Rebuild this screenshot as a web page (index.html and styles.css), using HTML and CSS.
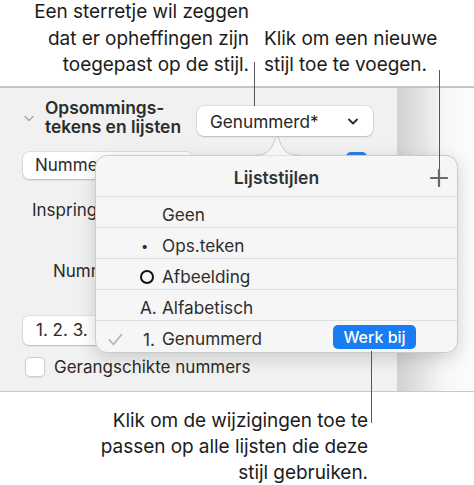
FILE: index.html
```html
<!DOCTYPE html>
<html lang="nl">
<head>
<meta charset="utf-8">
<link rel="stylesheet" href="styles.css">
</head>
<body>
<div class="page">
  <div class="top-notes">
    <p class="note note-left">Een sterretje wil zeggen<br>dat er opheffingen zijn<br>toegepast op de stijl.</p>
    <p class="note note-right">Klik om een nieuwe<br>stijl toe te voegen.</p>
  </div>

  <div class="window">
    <div class="sidebar">
      <div class="section-head">
        <svg class="disclosure" width="10" height="7" viewBox="0 0 10 7"><path d="M1 1.5 L5 5.5 L9 1.5" fill="none" stroke="#a9a9a9" stroke-width="1.5" stroke-linecap="round" stroke-linejoin="round"/></svg>
        <div class="section-title">Opsommings-<br>tekens en lijsten</div>
        <div class="popup-btn">
          <span>Genummerd*</span>
          <svg width="10" height="7" viewBox="0 0 10 7"><path d="M1 1.5 L5 5.5 L9 1.5" fill="none" stroke="#2a2a2a" stroke-width="1.8" stroke-linecap="round" stroke-linejoin="round"/></svg>
        </div>
      </div>
      <div class="row-type">
        <div class="type-btn">Nummers</div>
        <div class="blue-stub"></div>
      </div>
      <div class="label label-indent">Inspringen</div>
      <div class="label label-num">Nummering</div>
      <div class="num-field">1. 2. 3.</div>
      <div class="check-row">
        <span class="check-box"></span>
        <span class="check-label">Gerangschikte nummers</span>
      </div>
    </div>
    <div class="edge"></div>
  </div>

  <div class="bottom-note">
    <p class="note note-bottom">Klik om de wijzigingen toe te<br>passen op alle lijsten die deze<br>stijl gebruiken.</p>
  </div>

  <div class="popover">
    <div class="pop-head">
      <span class="pop-title">Lijststijlen</span>
      <svg class="plus" width="18" height="18" viewBox="0 0 18 18"><path d="M9 1 V17 M1 9 H17" stroke="#686868" stroke-width="2.2" stroke-linecap="round"/></svg>
    </div>
    <div class="pop-row"><span class="chk"></span><span class="mark"></span><span class="txt">Geen</span></div>
    <div class="pop-row"><span class="chk"></span><span class="mark mark-dot">•</span><span class="txt">Ops.teken</span></div>
    <div class="pop-row"><span class="chk"></span><span class="mark"><span class="ring"></span></span><span class="txt">Afbeelding</span></div>
    <div class="pop-row"><span class="chk"></span><span class="mark">A.</span><span class="txt">Alfabetisch</span></div>
    <div class="pop-row">
      <span class="chk"><svg width="15" height="13" viewBox="0 0 15 13"><path d="M1.5 7 L5.5 11.5 L13.5 1.5" fill="none" stroke="#b5b5b5" stroke-width="1.8" stroke-linecap="round" stroke-linejoin="round"/></svg></span>
      <span class="mark mark-num">1.</span><span class="txt">Genummerd</span>
      <span class="update-btn">Werk bij</span>
    </div>
  </div>
  <svg class="pop-arrow" width="44" height="21" viewBox="0 0 44 21"><path d="M0 20.5 C10 20.5 14 18 17.5 11 L20.5 3.5 Q22 0.8 23.5 3.5 L26.5 11 C30 18 34 20.5 44 20.5 Z" fill="#f6f6f6"/><path d="M0 20 C10 20 14 17.5 17.5 10.5 L20.5 3 Q22 0.3 23.5 3 L26.5 10.5 C30 17.5 34 20 44 20" fill="none" stroke="#c9c9c9" stroke-width="1"/></svg>

  <span class="leader leader-a"></span>
  <span class="leader leader-b"></span>
  <span class="leader leader-c"></span>
</div>
</body>
</html>
```
FILE: styles.css
```css
* { box-sizing: border-box; }
html, body { margin: 0; padding: 0; }
body {
  font-family: Inter, "Noto Sans", "Liberation Sans", sans-serif;
  background: #fff;
  color: #1c1c1c;
}
.page {
  position: relative;
  width: 474px;
  height: 485px;
  overflow: hidden;
  background: #fff;
}
.note {
  margin: 0;
  font-size: 19px;
  line-height: 26.5px;
  color: #1c1c1c;
  letter-spacing: -0.05px;
}
.top-notes {
  display: flex;
  height: 86px;
}
.note-left {
  width: 249px;
  text-align: right;
  margin-top: -1px;
}
.note-right {
  margin-left: 15px;
  margin-top: 25.5px;
}

.window {
  display: flex;
  height: 306px;
  border-top: 2px solid #c5c5c5;
  border-bottom: 1px solid #c9c9c9;
}
.sidebar {
  width: 398px;
  background: #f1f1f1;
  border-right: 1px solid #d3d3d3;
  color: #2a2a2a;
  font-size: 17px;
}
.edge {
  flex: 1;
  background: linear-gradient(to right, #d2d2d2 0%, #e6e6e6 35%, #f7f7f7 60%, #fcfcfc 100%);
}

.section-head {
  display: flex;
  align-items: flex-start;
  padding-top: 10px;
  height: 48px;
}
.disclosure {
  margin-left: 24px;
  margin-top: 17px;
}
.section-title {
  margin-left: 11px;
  width: 152px;
  font-weight: 600;
  line-height: 19px;
  font-size: 17.4px;
  color: #2c2c2c;
}
.popup-btn {
  margin-top: 8px;
  width: 176px;
  height: 30px;
  background: #fff;
  border-radius: 7px;
  box-shadow: 0 0 0 0.5px rgba(0,0,0,0.12), 0 1px 2px rgba(0,0,0,0.18);
  display: flex;
  align-items: center;
  justify-content: space-between;
  padding: 0 15px 0 13px;
  color: #262626;
  font-size: 17.2px;
}

.row-type {
  display: flex;
  margin-top: 16px;
}
.type-btn {
  margin-left: 23px;
  width: 170px;
  height: 27px;
  background: #fff;
  border-radius: 6px;
  box-shadow: 0 0 0 0.5px rgba(0,0,0,0.12), 0 1px 2px rgba(0,0,0,0.18);
  padding-left: 12px;
  line-height: 27px;
}
.blue-stub {
  margin-left: auto;
  margin-right: 30px;
  width: 21px;
  height: 26px;
  border-radius: 5px;
  background: #2c7de8;
}
.label {
  line-height: 20px;
}
.label-indent {
  margin-top: 21px;
  margin-left: 32px;
}
.label-num {
  margin-top: 41px;
  margin-left: 53px;
}
.num-field {
  margin-top: 35px;
  margin-left: 23px;
  width: 150px;
  height: 29px;
  background: #fff;
  border-radius: 6px;
  box-shadow: 0 0 0 0.5px rgba(0,0,0,0.12), 0 1px 2px rgba(0,0,0,0.18);
  padding-left: 13px;
  line-height: 29px;
}
.check-row {
  display: flex;
  align-items: center;
  margin-top: 12px;
  margin-left: 25px;
}
.check-box {
  width: 20px;
  height: 20px;
  border-radius: 5px;
  background: #fff;
  box-shadow: inset 0 0 0 1px #cdcdcd, 0 0.5px 1px rgba(0,0,0,0.1);
}
.check-label {
  margin-left: 9px;
  line-height: 20px;
}

.bottom-note {
  display: flex;
  padding-top: 16px;
}
.note-bottom {
  width: 368px;
  text-align: right;
  line-height: 26px;
}

.popover {
  position: absolute;
  left: 95px;
  top: 155px;
  width: 363px;
  height: 198px;
  background: #f6f6f6;
  border-radius: 12px;
  border: 1px solid #cbcbcb;
  box-shadow: 0 5px 18px rgba(0,0,0,0.16);
  color: #2e2e2e;
  font-size: 17.2px;
}
.pop-head {
  height: 41px;
  border-bottom: 1px solid #dddddd;
  display: flex;
  align-items: center;
  justify-content: center;
  position: relative;
}
.pop-title {
  font-weight: 600;
  font-size: 17.5px;
  color: #333;
  margin-top: 3px;
}
.plus {
  position: absolute;
  right: 9px;
  top: 13px;
}
.pop-row {
  height: 31px;
  border-bottom: 1px solid #dddddd;
  display: flex;
  align-items: center;
  padding-left: 12px;
  padding-top: 5px;
}
.pop-row:last-child {
  border-bottom: none;
}
.chk {
  width: 32px;
  display: flex;
  align-items: center;
  padding-top: 1px;
}
.mark {
  width: 22px;
  display: flex;
  align-items: center;
}
.mark-dot {
  font-size: 13px;
  padding-left: 1px;
}
.mark-num {
  padding-left: 3px;
}
.ring {
  width: 14px;
  height: 14px;
  border-radius: 50%;
  border: 2.6px solid #111;
}
.txt {
  line-height: 20px;
}
.update-btn {
  margin-left: auto;
  margin-right: 41px;
  margin-top: -4px;
  width: 83px;
  height: 24px;
  border-radius: 5px;
  background: #1a7cf2;
  color: #fff;
  font-size: 16px;
  font-weight: 500;
  display: flex;
  align-items: center;
  justify-content: center;
}

.pop-arrow {
  position: absolute;
  left: 255px;
  top: 135px;
}

.leader {
  position: absolute;
  width: 1px;
  background: #555;
}
.leader-a { left: 254px; top: 62px; height: 44px; }
.leader-b { left: 439px; top: 70px; height: 99px; }
.leader-c { left: 371px; top: 351px; height: 72px; }
```
